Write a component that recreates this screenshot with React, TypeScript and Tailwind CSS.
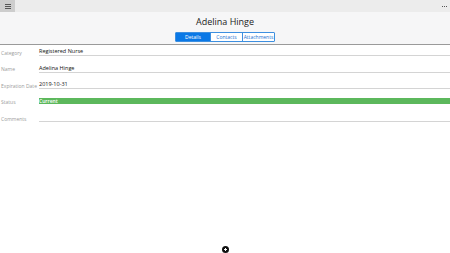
import React from 'react'

const fields = [
  { label: 'Category', value: 'Registered Nurse' },
  { label: 'Name', value: 'Adelina Hinge' },
  { label: 'Expiration Date', value: '2019-10-31' },
  { label: 'Status', value: 'Current', status: true },
  { label: 'Comments', value: '' },
]

const tabs = ['Details', 'Contacts', 'Attachments']

export default function App() {
  return (
    <div className="relative w-[450px] h-[253px] bg-white overflow-hidden" style={{ fontFamily: '"Open Sans", "Noto Sans", sans-serif' }}>
      {/* title bar */}
      <div className="flex items-center h-[12px] bg-[#ececec]">
        <div className="flex w-[15px] h-[12px] items-center justify-center bg-[#cdcdcd]">
          <div className="flex flex-col gap-[1px]">
            <div className="w-[6px] h-[1px] bg-[#555]" />
            <div className="w-[6px] h-[1px] bg-[#555]" />
            <div className="w-[6px] h-[1px] bg-[#555]" />
          </div>
        </div>
        <div className="flex-1" />
        <div className="flex gap-[1px] mr-[3px]">
          <div className="w-[1px] h-[1px] bg-[#555]" />
          <div className="w-[1px] h-[1px] bg-[#555]" />
          <div className="w-[1px] h-[1px] bg-[#555]" />
        </div>
      </div>

      {/* header */}
      <div className="flex flex-col items-center h-[33px] bg-[#f6f6f7] border-b border-[#9a9a9a]">
        <div className="mt-[4px] text-[9px] leading-[12px] text-[#222]">Adelina Hinge</div>
        <div className="flex mt-[4px] h-[10px] border border-[#3d8fe0] rounded-[1px] text-[5px] leading-[8px]">
          {tabs.map((t, i) => (
            <div
              key={t}
              className={
                i === 0
                  ? 'flex items-center justify-center w-[34px] bg-[#0a78e6] text-white'
                  : 'flex items-center justify-center w-[32px] bg-white text-[#1a6fd0] border-l border-[#3d8fe0]'
              }
            >
              {t}
            </div>
          ))}
        </div>
      </div>

      {/* form */}
      <div className="flex flex-col">
        {fields.map((f) => (
          <div key={f.label} className="flex items-start h-[16.5px]">
            <div className="w-[39px] pl-[1px] pt-[4.5px] text-[5px] leading-[6px] text-[#9b9b9b]">{f.label}</div>
            {f.status ? (
              <div className="flex-1 mt-[3.5px] h-[6px] bg-[#5cb85c] text-white text-[5px] leading-[6px] font-semibold">
                {f.value}
              </div>
            ) : (
              <div className="flex-1 h-[11px] pt-[3px] border-b border-[#d4d4d4] text-[5.5px] leading-[7px] text-[#111]">{f.value}</div>
            )}
          </div>
        ))}
      </div>

      {/* add button */}
      <div className="absolute left-[222px] top-[246px] flex items-center justify-center w-[7px] h-[7px] rounded-full bg-[#111]">
        <div className="relative w-[3px] h-[3px]">
          <div className="absolute left-[1px] top-0 w-[1px] h-[3px] bg-white" />
          <div className="absolute left-0 top-[1px] w-[3px] h-[1px] bg-white" />
        </div>
      </div>
    </div>
  )
}
